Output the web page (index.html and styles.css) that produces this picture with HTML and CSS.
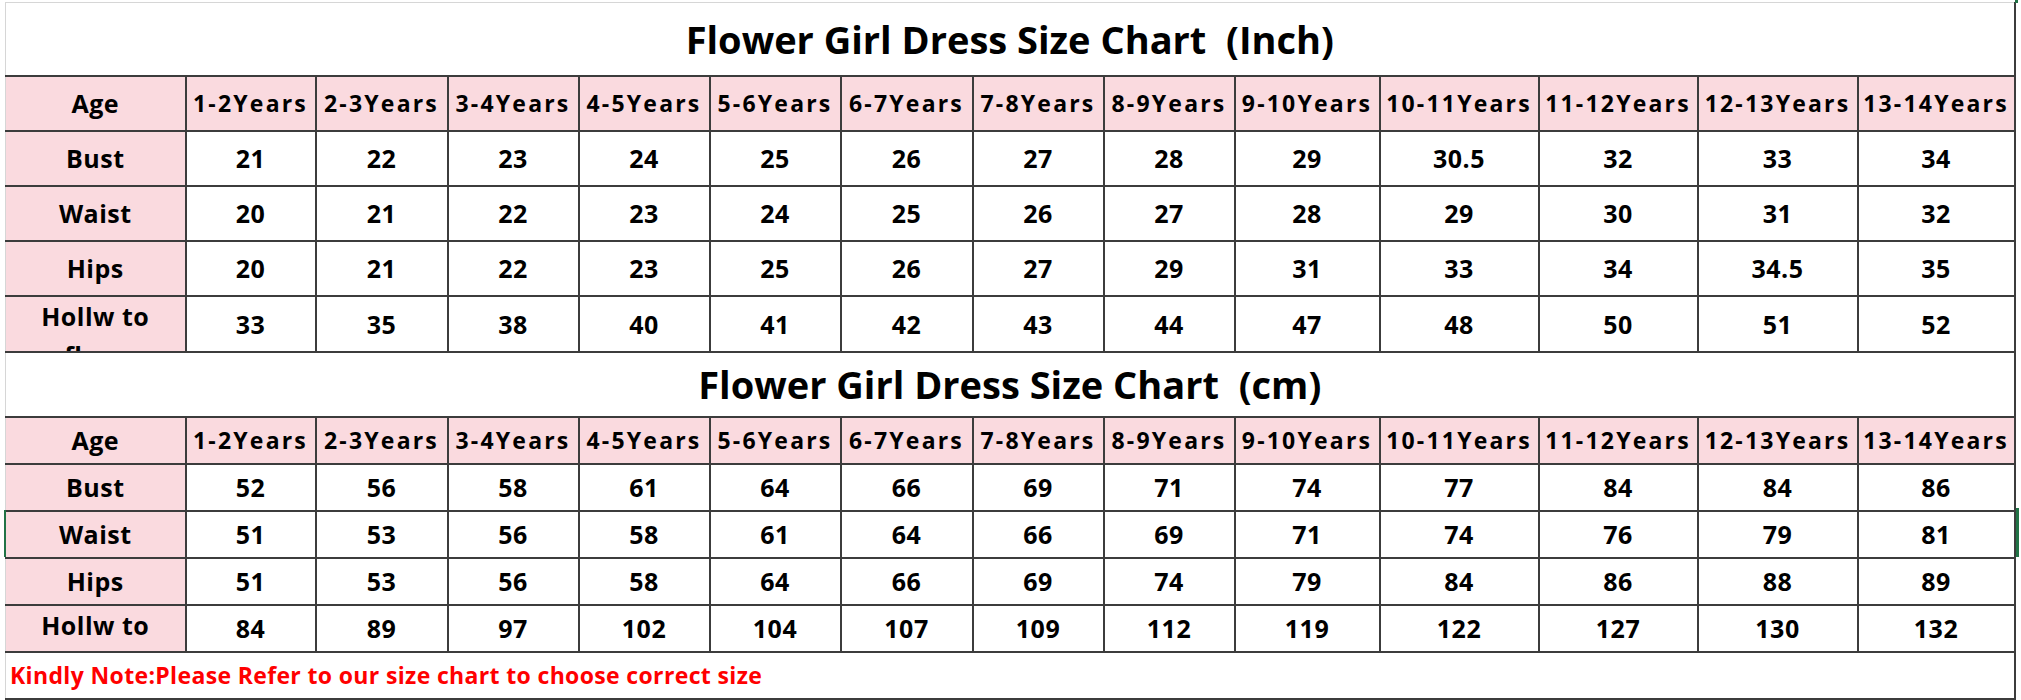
FILE: index.html
```html
<!DOCTYPE html>
<html>
<head>
<meta charset="utf-8">
<link rel="stylesheet" href="styles.css">
</head>
<body>
<div class="sheet">
  <table class="chart">
    <colgroup>
      <col style="width:180px"><col style="width:130px"><col style="width:132px"><col style="width:131px"><col style="width:131px"><col style="width:131px"><col style="width:132px"><col style="width:131px"><col style="width:131px"><col style="width:145px"><col style="width:159px"><col style="width:159px"><col style="width:160px"><col style="width:157px">
    </colgroup>
    <tr class="title-row t1"><td colspan="14" class="title"><span class="title-text">Flower Girl Dress Size Chart&nbsp;&nbsp;(Inch)</span></td></tr>
    <tr class="head-row r1"><th class="label">Age</th><th>1-2Years</th><th>2-3Years</th><th>3-4Years</th><th>4-5Years</th><th>5-6Years</th><th>6-7Years</th><th>7-8Years</th><th>8-9Years</th><th>9-10Years</th><th>10-11Years</th><th>11-12Years</th><th>12-13Years</th><th>13-14Years</th></tr>
    <tr class="r1"><th class="label">Bust</th><td>21</td><td>22</td><td>23</td><td>24</td><td>25</td><td>26</td><td>27</td><td>28</td><td>29</td><td>30.5</td><td>32</td><td>33</td><td>34</td></tr>
    <tr class="r1"><th class="label">Waist</th><td>20</td><td>21</td><td>22</td><td>23</td><td>24</td><td>25</td><td>26</td><td>27</td><td>28</td><td>29</td><td>30</td><td>31</td><td>32</td></tr>
    <tr class="r1"><th class="label">Hips</th><td>20</td><td>21</td><td>22</td><td>23</td><td>25</td><td>26</td><td>27</td><td>29</td><td>31</td><td>33</td><td>34</td><td>34.5</td><td>35</td></tr>
    <tr class="r1"><th class="label wrap"><div class="clip clip1">Hollw to<br>floor</div></th><td>33</td><td>35</td><td>38</td><td>40</td><td>41</td><td>42</td><td>43</td><td>44</td><td>47</td><td>48</td><td>50</td><td>51</td><td>52</td></tr>
    <tr class="title-row t2"><td colspan="14" class="title"><span class="title-text">Flower Girl Dress Size Chart&nbsp;&nbsp;(cm)</span></td></tr>
    <tr class="head-row r2"><th class="label">Age</th><th>1-2Years</th><th>2-3Years</th><th>3-4Years</th><th>4-5Years</th><th>5-6Years</th><th>6-7Years</th><th>7-8Years</th><th>8-9Years</th><th>9-10Years</th><th>10-11Years</th><th>11-12Years</th><th>12-13Years</th><th>13-14Years</th></tr>
    <tr class="r2"><th class="label">Bust</th><td>52</td><td>56</td><td>58</td><td>61</td><td>64</td><td>66</td><td>69</td><td>71</td><td>74</td><td>77</td><td>84</td><td>84</td><td>86</td></tr>
    <tr class="r2"><th class="label">Waist</th><td>51</td><td>53</td><td>56</td><td>58</td><td>61</td><td>64</td><td>66</td><td>69</td><td>71</td><td>74</td><td>76</td><td>79</td><td>81</td></tr>
    <tr class="r2"><th class="label">Hips</th><td>51</td><td>53</td><td>56</td><td>58</td><td>64</td><td>66</td><td>69</td><td>74</td><td>79</td><td>84</td><td>86</td><td>88</td><td>89</td></tr>
    <tr class="r2"><th class="label wrap"><div class="clip clip2">Hollw to<br>floor</div></th><td>84</td><td>89</td><td>97</td><td>102</td><td>104</td><td>107</td><td>109</td><td>112</td><td>119</td><td>122</td><td>127</td><td>130</td><td>132</td></tr>
    <tr class="note-row"><td colspan="14" class="note">Kindly Note:Please Refer to our size chart to choose correct size</td></tr>
  </table>
  <div class="sel sel-left"></div>
  <div class="sel sel-right"></div>
  <div class="sel sel-top"></div>
</div>
</body>
</html>
```

FILE: styles.css
```css
html, body {
  margin: 0;
  padding: 0;
  background: #ffffff;
}
body {
  font-family: "Open Sans", "Noto Sans", sans-serif;
  color: #000;
}
.sheet {
  position: relative;
  width: 2021px;
  height: 700px;
  padding: 2px 0 0 5px;
  box-sizing: border-box;
  overflow: hidden;
}
.chart {
  border-collapse: collapse;
  table-layout: fixed;
  width: 2010px;
  border-top: 1px solid #d6d6d6;
  border-left: 1px solid #d6d6d6;
}
.chart td, .chart th {
  padding: 0;
  text-align: center;
  vertical-align: middle;
  font-weight: 700;
  white-space: nowrap;
  border: 2px solid #3c3c3c;
}
.chart .title-row td {
  border-left: 1px solid #d6d6d6;
  border-top: none;
}
.t1 { height: 73px; }
.t2 { height: 65px; }
.chart .title {
  font-size: 38px;
  line-height: 1;
  letter-spacing: 0;
}
.title-text {
  display: inline-block;
  transform: scaleX(1.0);
}
.head-row th {
  background: #fadadf;
  font-size: 23px;
  letter-spacing: 2.2px;
}
.chart .label {
  background: #fadadf;
  font-size: 25px;
  border-left: 1px solid #d6d6d6;
  letter-spacing: 0.5px;
}
.r1 { height: 55px; }
.r2 { height: 47px; }
.chart td {
  font-size: 25px;
  letter-spacing: 0.5px;
}
.wrap { vertical-align: top; }
.clip {
  overflow: hidden;
  white-space: normal;
  line-height: 39px;
}
.clip1 { height: 54px; }
.clip2 { height: 45px; }
.note-row { height: 47px; }
.chart .note {
  text-align: left;
  color: #ff0000;
  font-size: 23px;
  padding-left: 4px;
  border-left: 1px solid #d6d6d6;
  letter-spacing: 0.35px;
}
.sel {
  position: absolute;
  background: #217346;
}
.sel-left { left: 4px; top: 510px; width: 2px; height: 47px; }
.sel-right { left: 2016px; top: 508px; width: 3px; height: 49px; }
.sel-top { left: 2015px; top: 0; width: 3px; height: 3px; }
```
